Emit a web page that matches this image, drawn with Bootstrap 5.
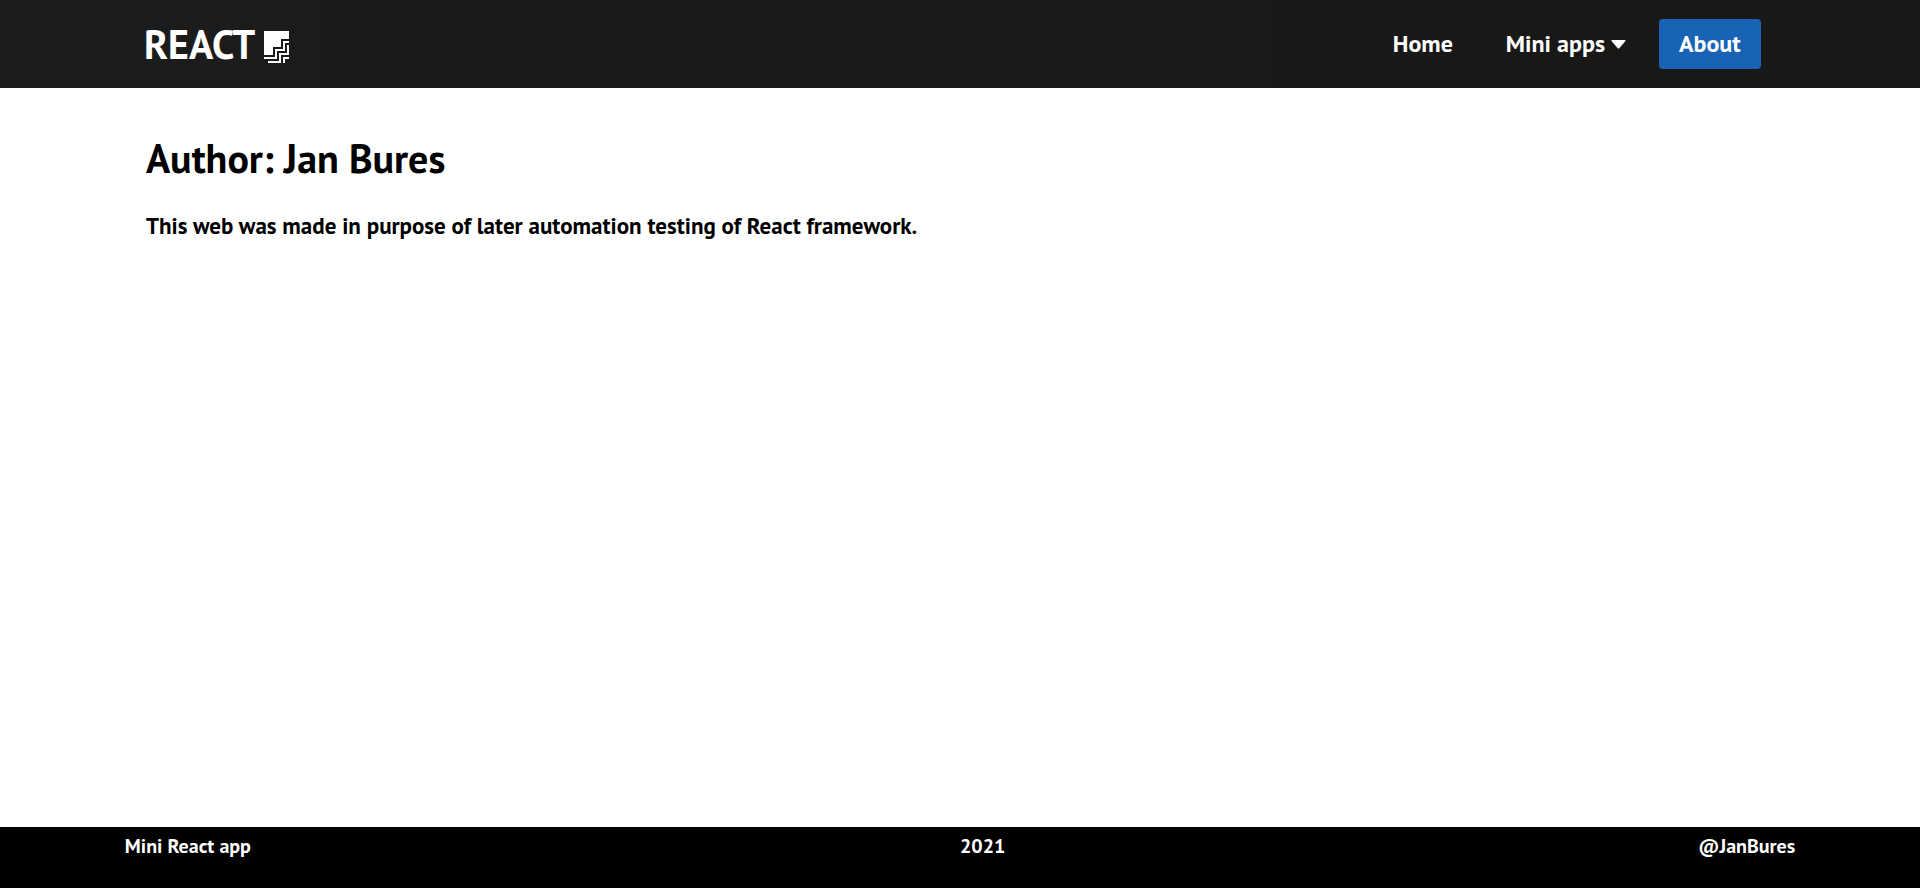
<!DOCTYPE html>
<html lang="en">
<head>
<meta charset="utf-8">
<meta name="viewport" content="width=device-width, initial-scale=1">
<title>React mini apps</title>
<link rel="stylesheet" href="https://cdn.jsdelivr.net/npm/bootstrap@5.3.0/dist/css/bootstrap.min.css">
<style>
body { font-family: "PT Sans", "Noto Sans", sans-serif; color: #000; }
.site-nav { background: linear-gradient(90deg, #1c1c1c, #1b1919 50%, #1a1816); min-height: 88px; }
.site-brand { font-size: 40px; line-height: 48px; font-weight: 700; gap: 9px; }
.site-brand svg { margin-top: 6px; }
.site-nav .navbar-nav { gap: 13px; }
.site-nav .navbar-nav .nav-link { font-size: 24px; line-height: 34px; font-weight: 700; color: #fff; padding: 8px 20px; border-radius: 4px; }
.site-nav .navbar-nav .nav-link.active { background: #1863b5; }
.menu-link { gap: 6px; }
.page-side { padding-left: 7.5%; padding-right: 8.3%; }
.foot-side { padding-left: 6.5%; padding-right: 6.5%; }
.page-main { padding-top: 46px; padding-left: 7.6%; }
.about-title { font-size: 40px; line-height: 48px; font-weight: 700; }
.about-text { font-size: 23px; line-height: 40px; font-weight: 700; }
.site-foot { background: #000; color: #fff; font-size: 20px; line-height: 22px; font-weight: 700; min-height: 61px; }
</style>
</head>
<body class="d-flex flex-column min-vh-100">
<nav class="navbar navbar-expand site-nav page-side py-0">
  <a class="site-brand d-flex align-items-center text-white text-decoration-none" href="#">REACT
    <svg width="26" height="32" viewBox="0 0 26 32" fill="none" stroke="#fff" stroke-width="2" aria-hidden="true"><path d="M0 0H25V8H17V16H9V24H0Z" fill="#fff" stroke="none"/><path d="M25 11H20V19H12V27H0M25 15H24V23H16V31H4M25 27H20V32"/></svg>
  </a>
  <ul class="navbar-nav ms-auto">
    <li class="nav-item"><a class="nav-link" href="#">Home</a></li>
    <li class="nav-item"><a class="nav-link menu-link d-flex align-items-center" href="#">Mini apps
      <svg width="15" height="9" viewBox="0 0 15 9" fill="#fff" aria-hidden="true"><path d="M1 0H14Q15 0 14.500 1L8.500 8Q7.500 9 6.500 8L.5 1Q0 0 1 0Z"/></svg></a></li>
    <li class="nav-item"><a class="nav-link active" aria-current="page" href="#">About</a></li>
  </ul>
</nav>
<main class="page-side page-main flex-grow-1">
  <h1 class="about-title mb-4">Author: Jan Bures</h1>
  <p class="about-text mb-0">This web was made in purpose of later automation testing of React framework.</p>
</main>
<footer class="site-foot foot-side d-flex pt-2">
  <span class="w-50">Mini React app</span><span>2021</span><span class="ms-auto">@JanBures</span>
</footer>
<script src="https://cdn.jsdelivr.net/npm/bootstrap@5.3.0/dist/js/bootstrap.bundle.min.js"></script>
</body>
</html>
